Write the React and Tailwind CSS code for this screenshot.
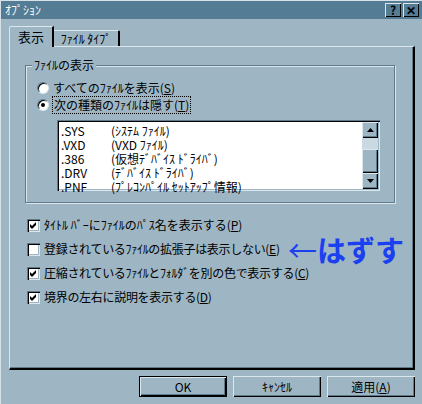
import React from 'react';

const raised =
  'shadow-[inset_1px_1px_0_#dce7ed,inset_-1px_-1px_0_#000000,inset_-2px_-2px_0_#5f7b8b]';
const sunken =
  'shadow-[inset_1px_1px_0_#5f7b8b,inset_2px_2px_0_#000000,inset_-1px_-1px_0_#dce7ed,inset_-2px_-2px_0_#9eb6c4]';

function Radio({ checked }) {
  return (
    <span className="w-[12px] h-[12px] rounded-full bg-white border border-t-[#5f7b8b] border-l-[#5f7b8b] border-r-[#dce7ed] border-b-[#dce7ed] shadow-[inset_1px_1px_0_#000] flex items-center justify-center shrink-0">
      {checked && <span className="w-[4px] h-[4px] rounded-full bg-black" />}
    </span>
  );
}

function Check({ checked }) {
  return (
    <span className={`w-[13px] h-[13px] bg-white ${sunken} flex items-center justify-center shrink-0`}>
      {checked && (
        <svg width="7" height="7" viewBox="0 0 7 7">
          <path d="M0 2 L2 4 L6 0 V3 L2 7 L0 5 Z" fill="#000" />
        </svg>
      )}
    </span>
  );
}

function Mn({ children }) {
  return <span className="underline underline-offset-1">{children}</span>;
}

const files = [
  ['.SYS', '(ｼｽﾃﾑ ﾌｧｲﾙ)'],
  ['.VXD', '(VXD ﾌｧｲﾙ)'],
  ['.386', '(仮想ﾃﾞﾊﾞｲｽ ﾄﾞﾗｲﾊﾞ)'],
  ['.DRV', '(ﾃﾞﾊﾞｲｽ ﾄﾞﾗｲﾊﾞ)'],
  ['.PNF', '(ﾌﾟﾚｺﾝﾊﾟｲﾙ ｾｯﾄｱｯﾌﾟ情報)'],
];

function ScrollBtn({ up }) {
  return (
    <div className={`h-[16px] bg-[#9eb6c4] ${raised} flex items-center justify-center`}>
      <svg width="7" height="4" viewBox="0 0 7 4">
        <path d={up ? 'M3.5 0 L7 4 H0 Z' : 'M0 0 H7 L3.5 4 Z'} fill="#000" />
      </svg>
    </div>
  );
}

export default function App() {
  return (
    <div className="w-[422px] h-[404px] bg-[#9eb6c4] border-l border-t border-[#d6e2e8] font-['Noto_Sans_CJK_JP',sans-serif] text-[12px] leading-[16px] text-black flex flex-col overflow-hidden">
      {/* title bar */}
      <div className="h-[18px] bg-[#547c94] flex items-center justify-between pl-[4px] pr-[3px]">
        <span className="text-white">ｵﾌﾟｼｮﾝ</span>
        <div className="flex gap-[2px]">
          <div className={`w-[16px] h-[14px] ${raised} flex items-center justify-center font-bold text-[12px]`}>?</div>
          <div className={`w-[16px] h-[14px] ${raised} flex items-center justify-center font-bold text-[12px]`}>✕</div>
        </div>
      </div>

      {/* tabs */}
      <div className="flex items-end pl-[8px] mt-[7px]">
        <div className="relative z-10 -mb-[1px] w-[45px] h-[21px] bg-[#9eb6c4] border-t border-l border-[#dce7ed] border-r-2 border-r-black rounded-tl-[2px] flex items-center justify-center text-[13px]">
          表示
        </div>
        <div className="w-[66px] h-[16px] border-t border-[#dce7ed] border-r-2 border-r-black rounded-tr-[2px] flex items-center justify-center">
          ﾌｧｲﾙ ﾀｲﾌﾟ
        </div>
      </div>

      {/* panel */}
      <div className="ml-[8px] w-[406px] h-[324px] border-l border-t border-[#dce7ed] border-r-2 border-b-2 border-r-black border-b-black shadow-[inset_-1px_-1px_0_#5f7b8b] flex flex-col">
        {/* group box */}
        <div className="relative mt-[18px] ml-[15px] w-[370px] h-[138px] border border-[#5f7b8b] shadow-[1px_1px_0_#dce7ed,inset_1px_1px_0_#dce7ed] flex flex-col">
          <span className="absolute -top-[9px] left-[6px] px-[2px] bg-[#9eb6c4]">ﾌｧｲﾙの表示</span>
          <div className="mt-[13px] ml-[11px] flex flex-col">
            <div className="h-[17px] flex items-center gap-[4px]">
              <Radio />
              <span>すべてのﾌｧｲﾙを表示(<Mn>S</Mn>)</span>
            </div>
            <div className="h-[17px] flex items-center gap-[4px]">
              <Radio checked />
              <span className="outline outline-1 outline-dotted outline-black px-[1px]">次の種類のﾌｧｲﾙは隠す(<Mn>T</Mn>)</span>
            </div>
          </div>

          {/* list box */}
          <div className={`mt-[7px] ml-[31px] w-[323px] h-[71px] shrink-0 bg-white ${sunken} p-[2px] flex`}>
            <div className="flex-1 pl-[2px] overflow-x-clip flex flex-col leading-[15px] pt-[1px]">
              {files.map(([ext, desc]) => (
                <div key={ext} className="h-[14px] shrink-0 flex whitespace-nowrap">
                  <span className="w-[50px]">{ext}</span>
                  <span>{desc}</span>
                </div>
              ))}
            </div>
            <div className="w-[16px] flex flex-col">
              <ScrollBtn up />
              <div className="h-[11px] bg-[#c9d8e1]" />
              <div className={`flex-1 bg-[#9eb6c4] ${raised}`} />
              <ScrollBtn />
            </div>
          </div>
        </div>

        {/* checkboxes */}
        <div className="mt-[10px] ml-[17px] flex flex-col">
          <div className="h-[24px] flex items-center gap-[4px]">
            <Check checked />
            <span>ﾀｲﾄﾙ ﾊﾞｰにﾌｧｲﾙのﾊﾟｽ名を表示する(<Mn>P</Mn>)</span>
          </div>
          <div className="relative h-[24px] flex items-center gap-[4px]">
            <Check />
            <span className="tracking-[-0.3px]">登録されているﾌｧｲﾙの拡張子は表示しない(<Mn>E</Mn>)</span>
            <span className="absolute left-[261px] top-[-2px] text-[29px] leading-[28px] text-[#1a40f0] font-bold whitespace-nowrap">
              <span className="font-normal">←</span>はずす
            </span>
          </div>
          <div className="h-[24px] flex items-center gap-[4px]">
            <Check checked />
            <span className="tracking-[-0.3px]">圧縮されているﾌｧｲﾙとﾌｫﾙﾀﾞを別の色で表示する(<Mn>C</Mn>)</span>
          </div>
          <div className="h-[24px] flex items-center gap-[4px]">
            <Check checked />
            <span className="tracking-[-0.3px]">境界の左右に説明を表示する(<Mn>D</Mn>)</span>
          </div>
        </div>
      </div>

      {/* buttons */}
      <div className="mt-[6px] flex justify-end gap-[6px] pr-[7px]">
        <button className={`w-[88px] h-[21px] bg-[#9eb6c4] border border-black ${raised} flex items-center justify-center`}>
          OK
        </button>
        <button className={`w-[88px] h-[21px] bg-[#9eb6c4] ${raised} flex items-center justify-center`}>
          ｷｬﾝｾﾙ
        </button>
        <button className={`w-[88px] h-[21px] bg-[#9eb6c4] ${raised} flex items-center justify-center`}>
          適用(<Mn>A</Mn>)
        </button>
      </div>
    </div>
  );
}
